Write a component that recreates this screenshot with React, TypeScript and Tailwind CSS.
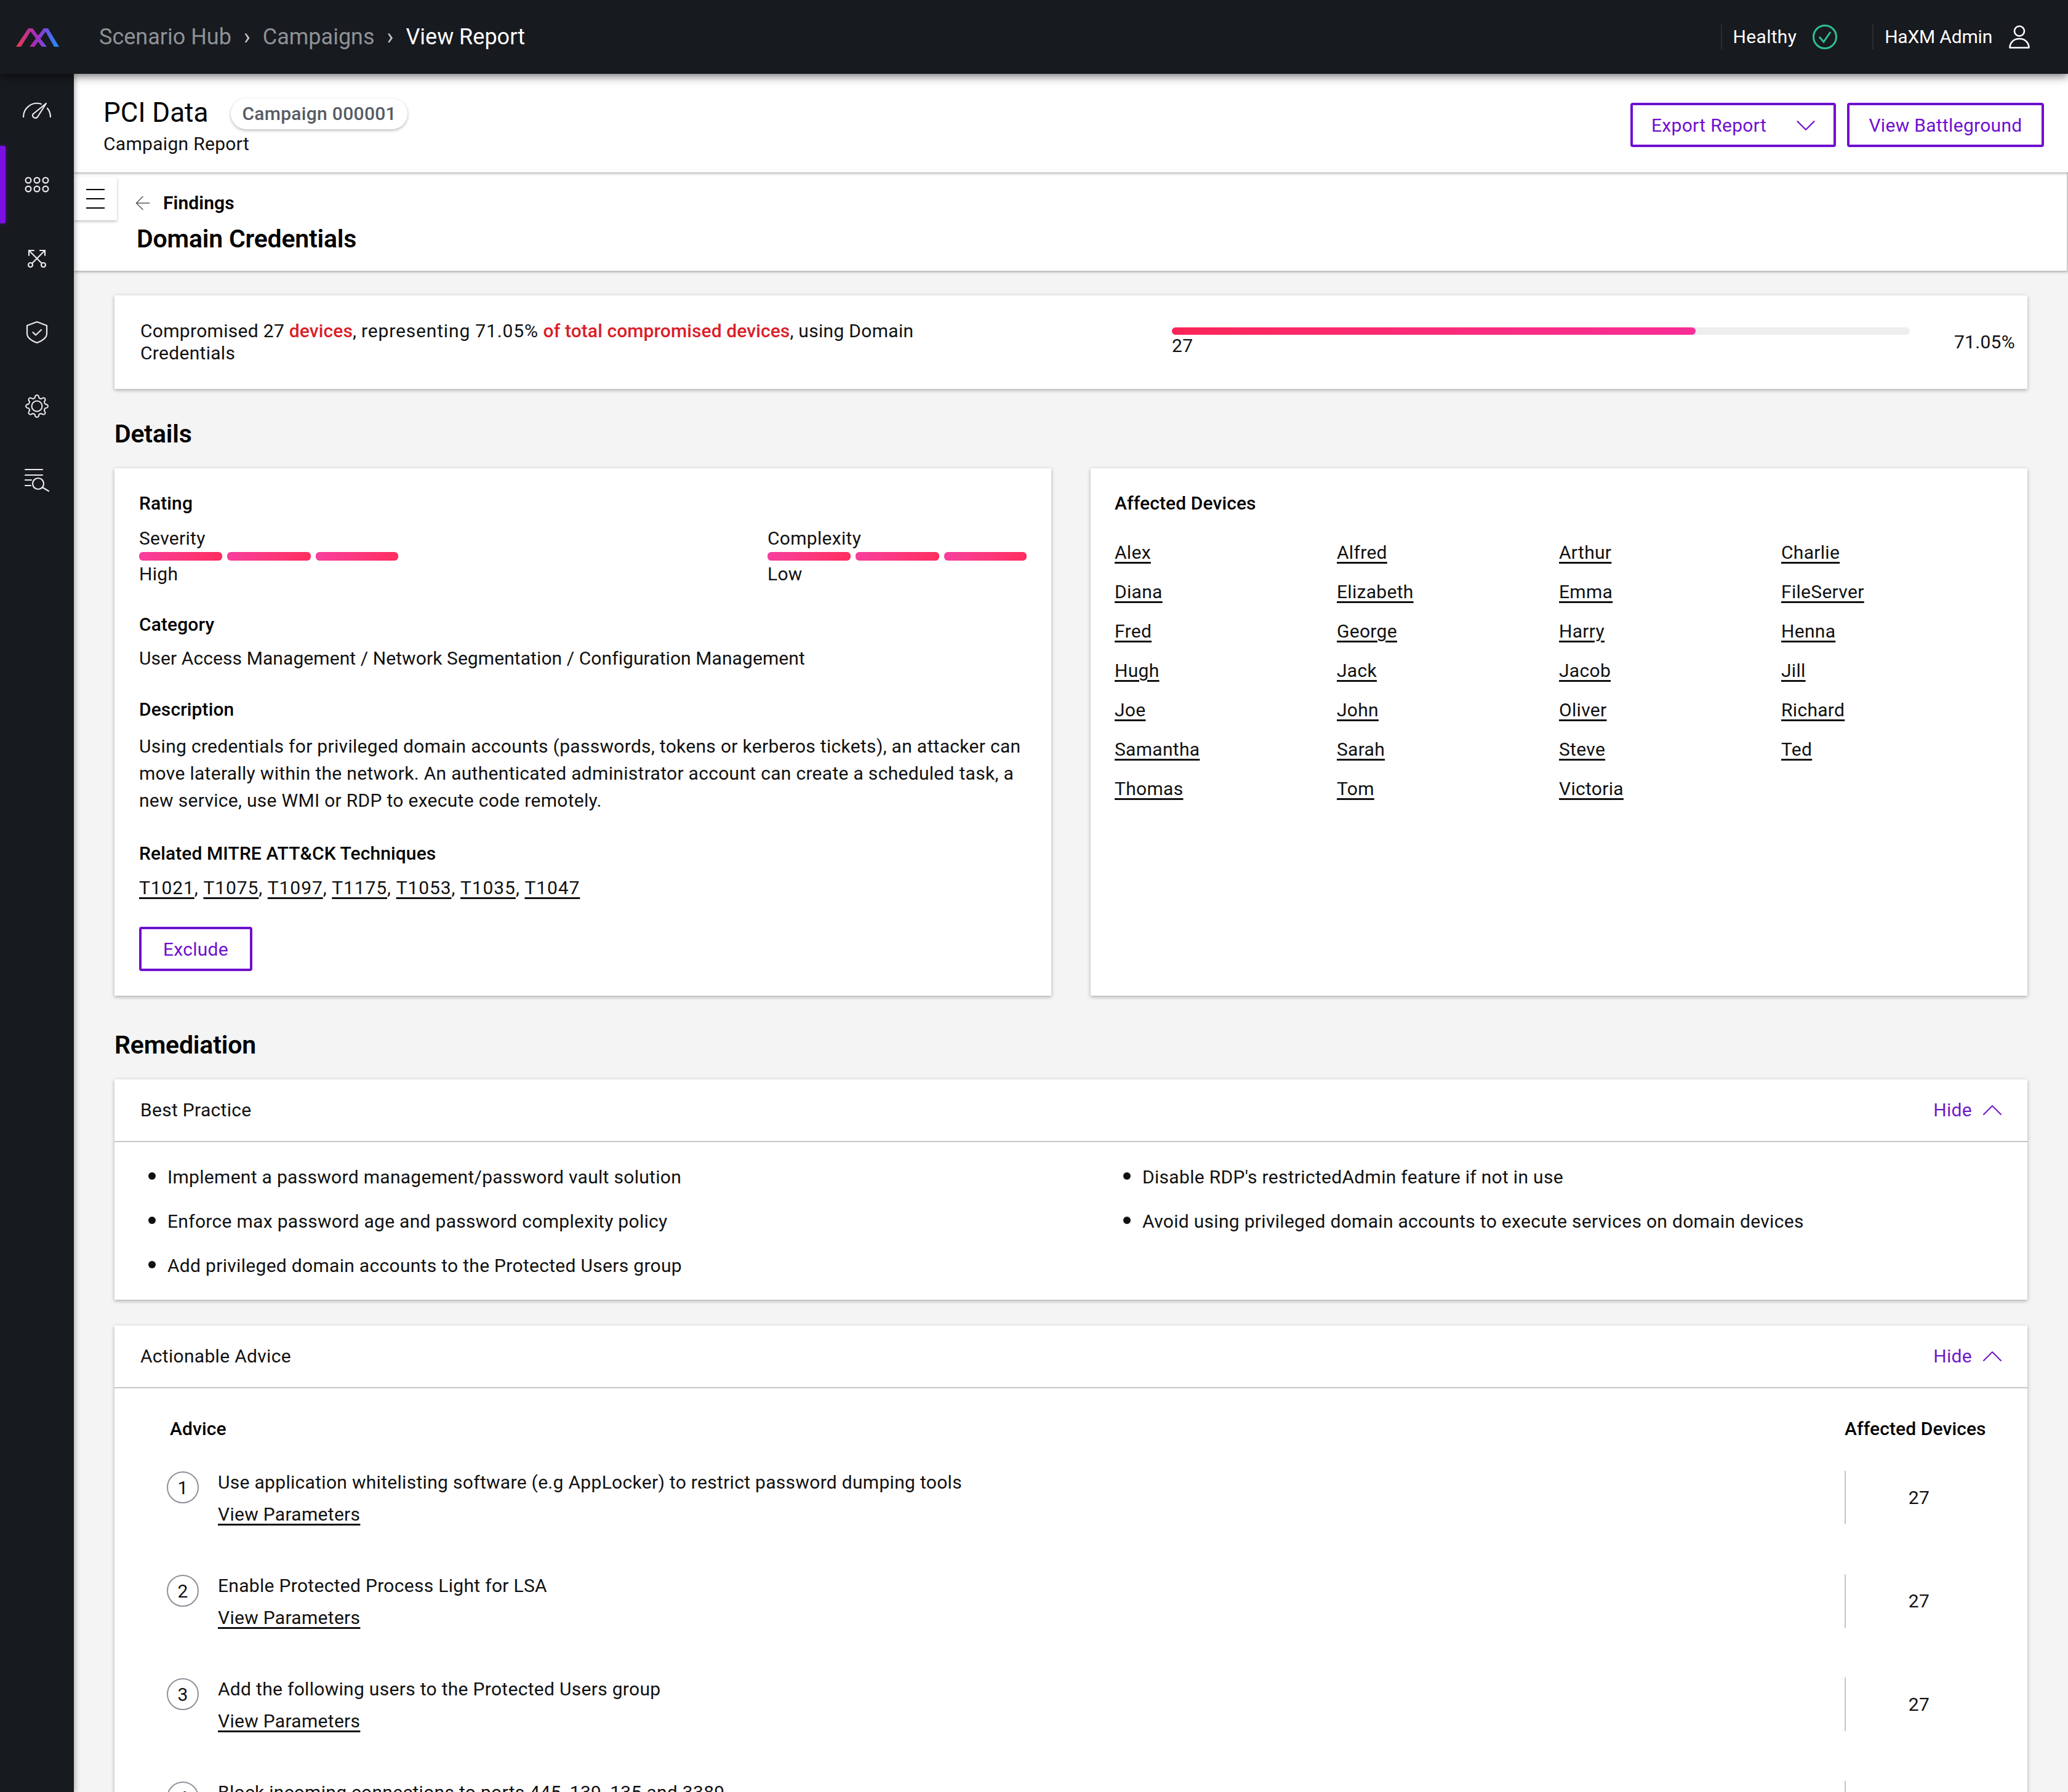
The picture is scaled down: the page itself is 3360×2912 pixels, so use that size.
import { ChevronDown, ChevronUp, ArrowLeft } from 'lucide-react';

const devices = [
  'Alex', 'Alfred', 'Arthur', 'Charlie',
  'Diana', 'Elizabeth', 'Emma', 'FileServer',
  'Fred', 'George', 'Harry', 'Henna',
  'Hugh', 'Jack', 'Jacob', 'Jill',
  'Joe', 'John', 'Oliver', 'Richard',
  'Samantha', 'Sarah', 'Steve', 'Ted',
  'Thomas', 'Tom', 'Victoria',
];

const techniques = ['T1021', 'T1075', 'T1097', 'T1175', 'T1053', 'T1035', 'T1047'];

const advice = [
  'Use application whitelisting software (e.g AppLocker) to restrict password dumping tools',
  'Enable Protected Process Light for LSA',
  'Add the following users to the Protected Users group',
  'Block incoming connections to ports 445, 139, 135 and 3389',
];

function gearPath() {
  const cx = 30;
  const cy = 30;
  const pts: string[] = [];
  const teeth = 8;
  for (let i = 0; i < teeth; i++) {
    const a = (i / teeth) * Math.PI * 2;
    const step = (Math.PI * 2) / teeth;
    const p = (r: number, t: number) =>
      `${(cx + r * Math.cos(t)).toFixed(1)} ${(cy + r * Math.sin(t)).toFixed(1)}`;
    pts.push(`${i === 0 ? 'M' : 'L'}${p(14, a - step * 0.3)}`);
    pts.push(`Q${p(18, a - step * 0.22)} ${p(18, a)}`);
    pts.push(`Q${p(18, a + step * 0.22)} ${p(14, a + step * 0.3)}`);
    pts.push(`Q${p(13, a + step * 0.5)} ${p(14, a + step * 0.7)}`);
  }
  return pts.join(' ') + 'Z';
}

function Logo() {
  return (
    <svg width="120" height="120" viewBox="0 0 120 120" className="shrink-0">
      <defs>
        <linearGradient id="logo" gradientUnits="userSpaceOnUse" x1="26" y1="0" x2="95" y2="0">
          <stop offset="0" stopColor="#ea3c4c" />
          <stop offset="0.45" stopColor="#a52cb8" />
          <stop offset="0.7" stopColor="#6f4fe0" />
          <stop offset="1" stopColor="#1593ff" />
        </linearGradient>
      </defs>
      <polygon fill="url(#logo)" points="26,76 34,76 53,46 46,46" />
      <polygon fill="url(#logo)" points="46,46 53,46 76,76 68,76" />
      <polygon fill="url(#logo)" points="48,76 56,76 78,46 71,46" />
      <polygon fill="url(#logo)" points="71,46 78,46 96,76 88,76" />
    </svg>
  );
}

function NavIcon({ children }: { children: React.ReactNode }) {
  return (
    <div className="flex h-[120px] w-[120px] items-center justify-center">
      <svg width="60" height="60" viewBox="0 0 60 60" fill="none" stroke="#e8eaec" strokeWidth="2.2" strokeLinecap="round" strokeLinejoin="round">
        {children}
      </svg>
    </div>
  );
}

function Sidebar() {
  return (
    <div className="relative z-20 flex w-[120px] shrink-0 flex-col bg-[#171a1f] shadow-[2px_0_8px_rgba(0,0,0,0.3)]">
      <NavIcon>
        <path d="M8 40 A22 22 0 0 1 37 19" />
        <path d="M47 26 A22 22 0 0 1 52 40" />
        <path d="M45 18 L31 40 a4.4 4.4 0 0 1 -7.5 -4.5 Z" />
      </NavIcon>
      <div className="relative">
        <div className="absolute left-0 top-[-3px] h-[126px] w-[9px] rounded-r-[3px] bg-[#7a0fe6] shadow-[0_0_6px_rgba(122,15,230,0.6)]" />
        <NavIcon>
          <circle cx="16" cy="23" r="4.4" />
          <circle cx="30" cy="23" r="4.4" />
          <circle cx="44" cy="23" r="4.4" />
          <circle cx="16" cy="37" r="4.4" />
          <circle cx="30" cy="37" r="4.4" />
          <circle cx="44" cy="37" r="4.4" />
        </NavIcon>
      </div>
      <NavIcon>
        <path d="M17 17 L37.5 37.5" />
        <path d="M43 17 L22.5 37.5" />
        <path d="M17 25 V17 H25" />
        <path d="M35 17 H43 V25" />
        <circle cx="19.5" cy="40.5" r="3.5" />
        <circle cx="40.5" cy="40.5" r="3.5" />
      </NavIcon>
      <NavIcon>
        <path d="M30 13 L46 19 V32 C46 40 38 44 30 47 C22 44 14 40 14 32 V19 Z" />
        <path d="M23.5 30 L28 34.5 L37 26" />
      </NavIcon>
      <NavIcon>
        <path d={gearPath()} strokeWidth="2" />
        <circle cx="30" cy="30" r="8.5" strokeWidth="2" />
      </NavIcon>
      <NavIcon>
        <path d="M11 13 H39" />
        <path d="M11 22 H39" />
        <path d="M11 30 H21" />
        <path d="M11 39 H20" />
        <circle cx="32" cy="36" r="9" />
        <path d="M39 42 L49 48" />
      </NavIcon>
    </div>
  );
}

function TopBar() {
  return (
    <div className="relative z-30 flex h-[120px] shrink-0 items-center bg-[#171a1f] pr-[62px] shadow-[0_4px_14px_rgba(0,0,0,0.55)]">
      <Logo />
      <div className="ml-[41px] flex items-center text-[36px] tracking-normal text-[#8e9296]">
        <span>Scenario Hub</span>
        <span className="ml-[20px] text-[#c8cacc]">›</span>
        <span className="ml-[20px]">Campaigns</span>
        <span className="ml-[20px] text-[#c8cacc]">›</span>
        <span className="ml-[20px] text-white">View Report</span>
      </div>
      <div className="ml-auto flex items-center text-white">
        <div className="h-[40px] w-[2px] bg-[#2a2e33]" />
        <span className="ml-[18px]">Healthy</span>
        <svg width="42" height="42" viewBox="0 0 42 42" fill="none" stroke="#2fbf95" strokeWidth="3" className="ml-[25px]">
          <circle cx="21" cy="21" r="18.5" />
          <path d="M12 21 L19 29 L30 13" />
        </svg>
        <div className="ml-[56px] h-[40px] w-[2px] bg-[#2a2e33]" />
        <span className="ml-[18px] tracking-[-0.2px]">HaXM Admin</span>
        <svg width="34" height="38" viewBox="0 0 34 38" fill="none" stroke="#fff" strokeWidth="2.6" className="ml-[27px]">
          <circle cx="17" cy="9.5" r="8" />
          <path d="M1.5 36.5 H32.5 C32.5 30 28 22 17 22 C6 22 1.5 30 1.5 36.5 Z" strokeLinejoin="round" />
        </svg>
      </div>
    </div>
  );
}

function PageHeader() {
  return (
    <div className="relative z-10 flex h-[160px] shrink-0 items-center bg-white pl-[48px] pr-[39px] pt-[6px] shadow-[0_2px_4px_rgba(0,0,0,0.3)]">
      <div className="mt-[5px]">
        <div className="flex items-center">
          <span className="text-[44px] leading-[56px] tracking-normal text-black">PCI Data</span>
          <span className="ml-[37px] mt-[3px] flex h-[50px] items-center rounded-full bg-white px-[18px] font-medium text-[#565c63] shadow-[0_2px_5px_rgba(0,0,0,0.28)]">
            Campaign 000001
          </span>
        </div>
        <div className="mt-[1px] leading-[44px]">Campaign Report</div>
      </div>
      <div className="ml-auto flex items-center gap-[18px] text-[#6f0fd0]">
        <button className="flex h-[72px] w-[334px] items-center rounded-[4px] border-[4px] border-[#6f0fd0] pl-[30px] pt-[2px]">
          <span>Export Report</span>
          <ChevronDown className="ml-auto mr-[18px] shrink-0" size={54} strokeWidth={1} />
        </button>
        <button className="flex h-[72px] w-[320px] items-center justify-center rounded-[4px] border-[4px] border-[#6f0fd0] pt-[2px]">
          View Battleground
        </button>
      </div>
    </div>
  );
}

function SubHeader() {
  return (
    <div className="relative z-[5] h-[160px] shrink-0 border-r-[2px] border-[#ccc] bg-white pl-[94px] pt-[28px] shadow-[0_2px_4px_rgba(0,0,0,0.3)]">
      <div className="absolute left-0 top-[8px] flex h-[70px] w-[70px] flex-col items-center justify-center gap-[13px] bg-white shadow-[0_2px_4px_rgba(0,0,0,0.25)]">
        <div className="h-[2px] w-[30px] bg-black" />
        <div className="h-[2px] w-[30px] bg-black" />
        <div className="h-[2px] w-[30px] bg-black" />
      </div>
      <div className="flex h-[44px] items-center">
        <ArrowLeft size={36} strokeWidth={1} className="text-[#555]" />
        <span className="ml-[15px] font-semibold tracking-[0.1px] text-black">Findings</span>
      </div>
      <div className="ml-[8px] mt-[8px] text-[41px] font-semibold leading-[56px] tracking-[-0.2px] text-black">
        Domain Credentials
      </div>
    </div>
  );
}

function SummaryCard() {
  return (
    <div className="mt-[40px] flex h-[152px] items-center bg-white shadow-[0_2px_6px_rgba(0,0,0,0.3)]">
      <div className="w-[1718px] pl-[42px] pr-[370px] leading-[36px]">
        Compromised 27 <span className="font-medium tracking-[0.1px] text-[#da1e28]">devices</span>,{' '}
        <span className="tracking-[0.85px]">representing 71.05%</span>{' '}
        <span className="font-medium tracking-[0.1px] text-[#da1e28]">of total compromised devices</span>, using Domain Credentials
      </div>
      <div className="w-[1199px]">
        <div className="h-[12px] rounded-full bg-[#eeeeee]">
          <div className="h-[12px] w-[71%] rounded-full bg-gradient-to-r from-[#fb2557] to-[#f72d97]" />
        </div>
        <div className="leading-[36px]">27</div>
      </div>
      <div className="ml-auto pr-[20px]">71.05%</div>
    </div>
  );
}

function RatingBars() {
  return (
    <div className="flex gap-[8px]">
      <div className="h-[14px] w-[135px] rounded-[6px] bg-gradient-to-r from-[#f83e9e] to-[#ff2d5c]" />
      <div className="h-[14px] w-[136px] rounded-[6px] bg-gradient-to-r from-[#f83e9e] to-[#ff2d5c]" />
      <div className="h-[14px] w-[134px] rounded-[6px] bg-gradient-to-r from-[#f83e9e] to-[#ff2d5c]" />
    </div>
  );
}

function RatingCard() {
  return (
    <div className="w-[1522px] shrink-0 bg-white px-[40px] pb-[40px] pt-[35px] shadow-[0_2px_6px_rgba(0,0,0,0.3)]">
      <div className="font-medium tracking-[0.1px] text-black">Rating</div>
      <div className="mt-[13px] flex">
        <div className="w-[1024px]">
          <div>Severity</div>
          <RatingBars />
          <div>High</div>
        </div>
        <div>
          <div>Complexity</div>
          <RatingBars />
          <div>Low</div>
        </div>
      </div>
      <div className="mt-[38px] font-medium tracking-[0.1px] text-black">Category</div>
      <div className="mt-[11px] tracking-[0.08px]">User Access Management / Network Segmentation / Configuration Management</div>
      <div className="mt-[39px] font-medium tracking-[0.1px] text-black">Description</div>
      <p className="mt-[16px]">
        Using credentials for privileged domain accounts (passwords, tokens or kerberos tickets), an attacker can move laterally within the network. An authenticated administrator account can create a scheduled task, a new service, use WMI or RDP to execute code remotely.
      </p>
      <div className="mt-[42px] font-medium tracking-[0.1px] text-black">Related MITRE ATT&amp;CK Techniques</div>
      <div className="mt-[12px] tracking-[0.9px]">
        {techniques.map((t, i) => (
          <span key={t}>
            <a className="underline underline-offset-[5px]">{t}</a>
            {i < techniques.length - 1 ? ', ' : ''}
          </span>
        ))}
      </div>
      <button className="mt-[41px] flex h-[72px] w-[184px] items-center justify-center rounded-[4px] border-[4px] border-[#6f0fd0] pt-[2px] text-[#6f0fd0]">
        Exclude
      </button>
    </div>
  );
}

function DevicesCard() {
  return (
    <div className="w-[1522px] shrink-0 bg-white pl-[39px] pt-[35px] shadow-[0_2px_6px_rgba(0,0,0,0.3)]">
      <div className="font-medium tracking-[0.1px] text-black">Affected Devices</div>
      <div className="mt-[36px] grid grid-cols-[361px_361px_361px_361px] gap-y-[20px]">
        {devices.map((d) => (
          <a key={d} className="underline underline-offset-[5px]">{d}</a>
        ))}
      </div>
    </div>
  );
}

function AccordionHeader({ title }: { title: string }) {
  return (
    <div className="flex h-[102px] items-center border-b-[2px] border-[#c6c6c6] pl-[42px] pr-[43px]">
      <span>{title}</span>
      <span className="ml-auto text-[#6f1ac8]">Hide</span>
      <ChevronUp size={56} strokeWidth={0.9} className="ml-[5px] mr-[-14px] shrink-0 text-[#6f1ac8]" />
    </div>
  );
}

function BestPractice() {
  return (
    <div className="mt-[28px] bg-white shadow-[0_2px_6px_rgba(0,0,0,0.3)]">
      <AccordionHeader title="Best Practice" />
      <div className="grid h-[256px] grid-cols-[1584px_1fr] pt-[32px]">
        <ul className="flex list-disc flex-col gap-[28px] pl-[86px] marker:text-[40px]">
          <li className="h-[44px]">Implement a password management/password vault solution</li>
          <li className="h-[44px]">Enforce max password age and password complexity policy</li>
          <li className="h-[44px]">Add privileged domain accounts to the Protected Users group</li>
        </ul>
        <ul className="flex list-disc flex-col gap-[28px] pl-[86px] marker:text-[40px]">
          <li className="h-[44px]">Disable RDP's restrictedAdmin feature if not in use</li>
          <li className="h-[44px]">Avoid using privileged domain accounts to execute services on domain devices</li>
        </ul>
      </div>
    </div>
  );
}

function ActionableAdvice() {
  return (
    <div className="mt-[42px] bg-white pb-[60px] shadow-[0_2px_6px_rgba(0,0,0,0.3)]">
      <AccordionHeader title="Actionable Advice" />
      <div className="flex pt-[44px] font-medium tracking-[0.1px] text-black">
        <div className="flex-1 pl-[90px]">Advice</div>
        <div className="w-[297px]">Affected Devices</div>
      </div>
      <div className="mt-[43px] flex flex-col gap-[72px]">
        {advice.map((text, i) => (
          <div key={text} className="flex h-[96px]">
            <div className="ml-[85px] mt-[4px] flex h-[52px] w-[52px] shrink-0 items-center justify-center rounded-full border-[2px] border-[#8d9298] pt-[2px]">
              {i + 1}
            </div>
            <div className="ml-[31px] flex-1">
              <div>{text}</div>
              <a className="mt-[8px] block underline underline-offset-[5px]">View Parameters</a>
            </div>
            <div className="mt-[3px] flex h-[87px] w-[297px] items-center justify-center border-l-[2px] border-[#c6c6c6] pr-[57px]">
              27
            </div>
          </div>
        ))}
      </div>
    </div>
  );
}

export default function App() {
  return (
    <div className="flex h-[2912px] w-[3360px] flex-col overflow-hidden bg-[#f4f4f4] font-['Roboto',sans-serif] text-[30px] leading-[44px] tracking-[0.3px] text-[#111]">
      <TopBar />
      <div className="flex min-h-0 flex-1">
        <Sidebar />
        <div className="flex min-w-0 flex-1 flex-col">
          <PageHeader />
          <SubHeader />
          <div className="min-h-0 flex-1 overflow-hidden px-[66px]">
            <SummaryCard />
            <h2 className="mt-[45px] text-[41px] font-semibold leading-[56px] tracking-[-0.2px] text-black">Details</h2>
            <div className="mt-[28px] flex gap-[64px]">
              <RatingCard />
              <DevicesCard />
            </div>
            <h2 className="mt-[52px] text-[41px] font-semibold leading-[56px] tracking-[-0.2px] text-black">Remediation</h2>
            <BestPractice />
            <ActionableAdvice />
          </div>
        </div>
      </div>
    </div>
  );
}
